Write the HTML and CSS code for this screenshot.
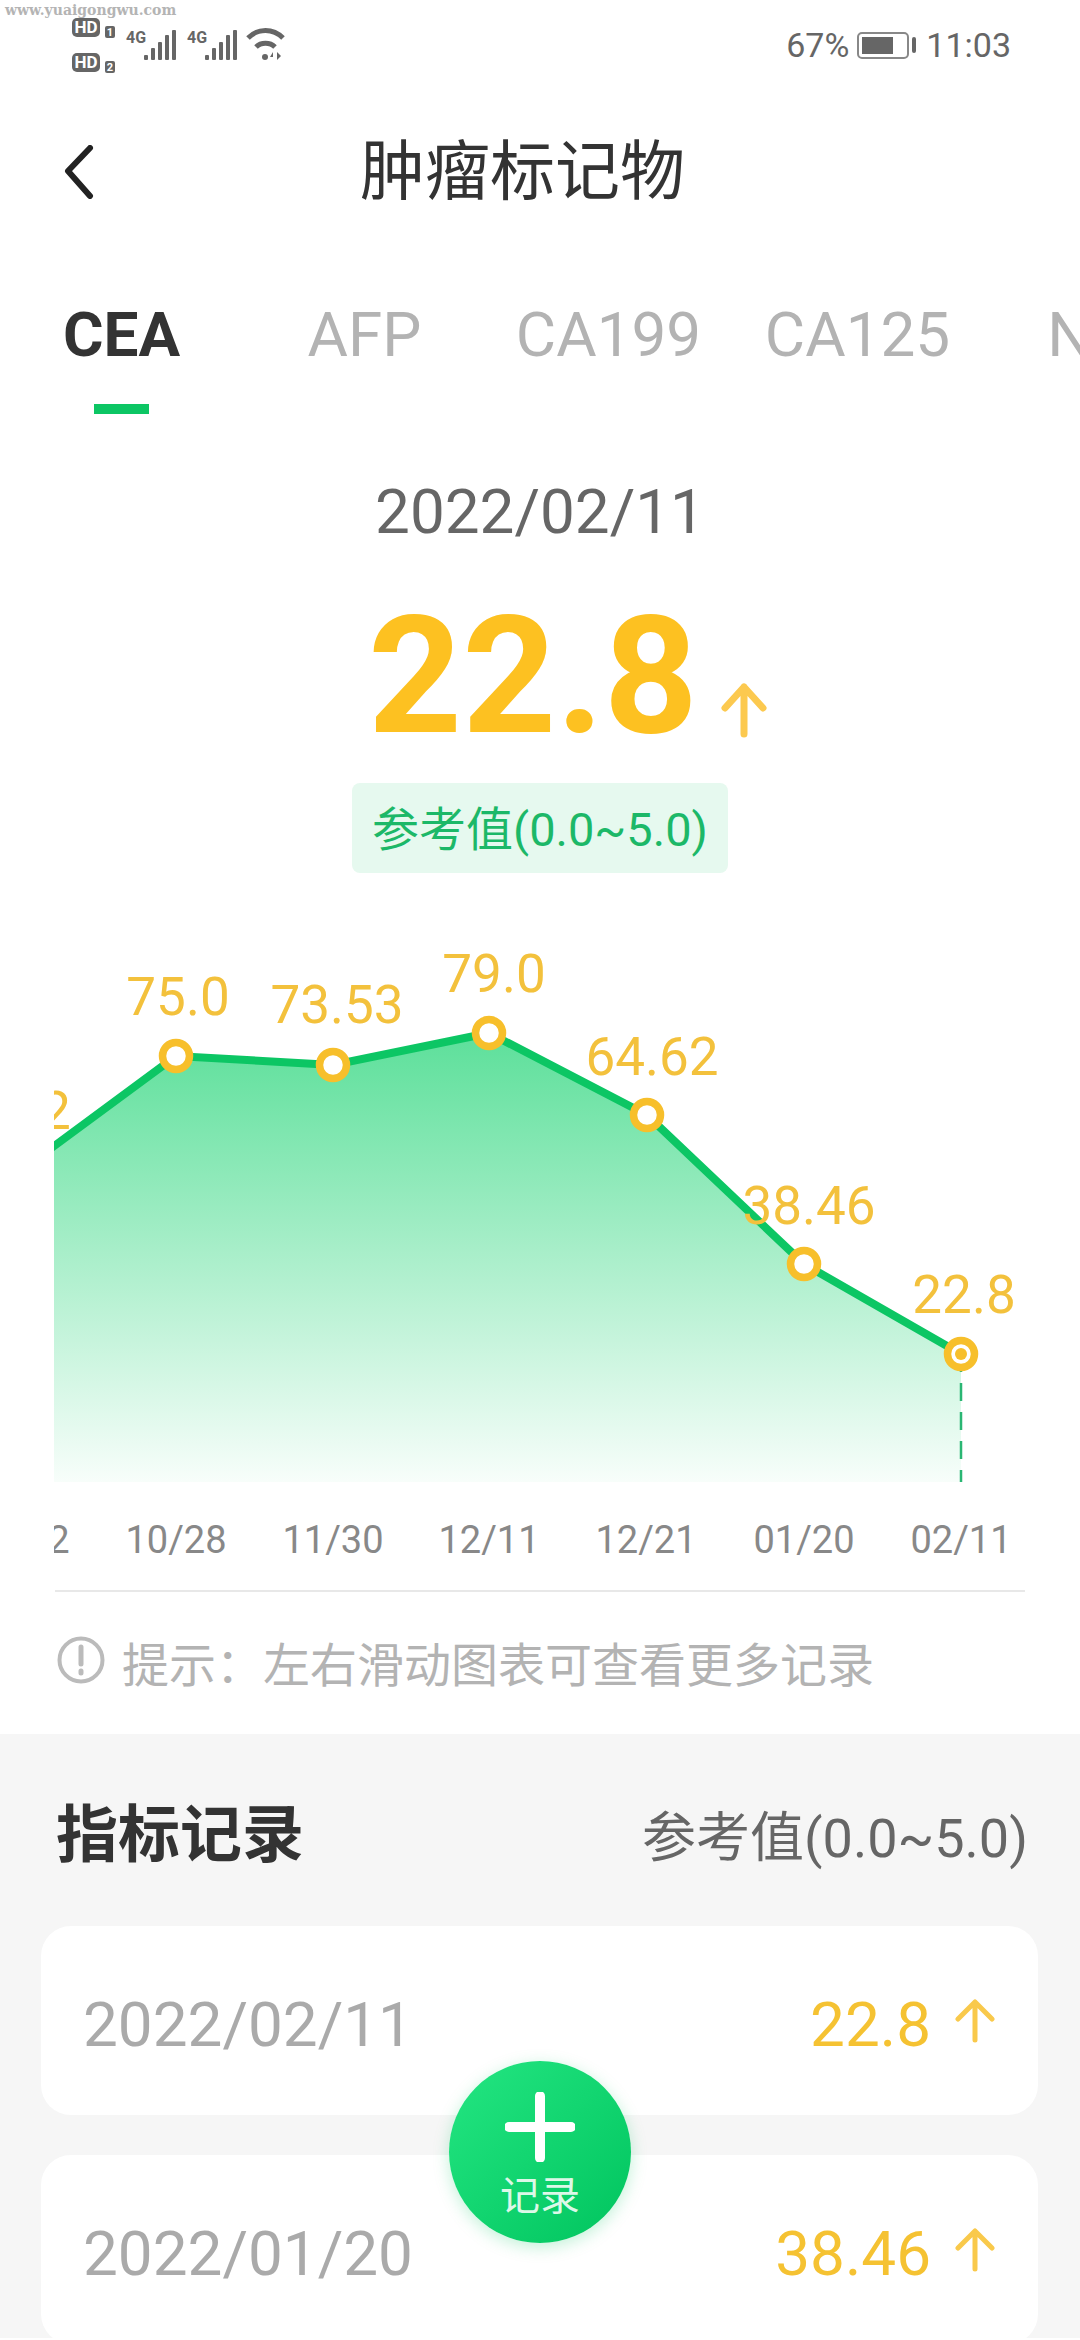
FILE: index.html
```html
<!DOCTYPE html>
<html lang="zh-CN">
<head>
    <meta charset="UTF-8">
    <meta name="viewport" content="width=device-width, initial-scale=1.0">
    <title>肿瘤标记物</title>
    <link rel="stylesheet" href="styles.css">
</head>
<body>
    <div class="page">
        <div class="watermark">www.yuaigongwu.com</div>

        <!-- Status bar -->
        <div class="status">
            <svg class="status-icons" width="230" height="90" viewBox="70 0 230 90">
                <g class="ic-fill">
                    <rect x="72" y="18" width="28" height="19" rx="5"/>
                    <rect x="105" y="26" width="10" height="12" rx="2"/>
                    <rect x="72" y="53" width="28" height="19" rx="5"/>
                    <rect x="105" y="61" width="10" height="12" rx="2"/>
                    <rect x="144" y="55" width="4" height="5" rx="1"/>
                    <rect x="151" y="48" width="4" height="12" rx="1"/>
                    <rect x="158" y="42" width="4" height="18" rx="1"/>
                    <rect x="165" y="35" width="4" height="25" rx="1"/>
                    <rect x="172" y="30" width="4" height="30" rx="1"/>
                    <rect x="205" y="55" width="4" height="5" rx="1"/>
                    <rect x="212" y="48" width="4" height="12" rx="1"/>
                    <rect x="219" y="42" width="4" height="18" rx="1"/>
                    <rect x="226" y="35" width="4" height="25" rx="1"/>
                    <rect x="233" y="30" width="4" height="30" rx="1"/>
                    <circle cx="265" cy="57" r="3"/>
                    <path d="M273 60v-8l-3 5h3zM277 52v8l4-4z"/>
                </g>
                <text class="hd" x="86" y="33">HD</text>
                <text class="hd-num" x="110" y="36">1</text>
                <text class="hd" x="86" y="68">HD</text>
                <text class="hd-num" x="110" y="71">2</text>
                <text class="net" x="126" y="43">4G</text>
                <text class="net" x="187" y="43">4G</text>
                <path class="ic-line" d="M248 38c10-10 25-10 35 0M256 47c5-5 14-5 19 0"/>
            </svg>
            <div class="status-right">
                <span>67%</span>
                <div class="battery"><div class="battery-level"></div></div>
                <div class="battery-tip"></div>
                <span>11:03</span>
            </div>
        </div>

        <!-- Title -->
        <div class="nav">
            <svg class="back" width="30" height="54" viewBox="0 0 30 54">
                <path d="M26 3L4 26l22 25"/>
            </svg>
            <div class="nav-title">肿瘤标记物</div>
        </div>

        <!-- Tabs -->
        <div class="tabs">
            <div class="tab active">CEA</div>
            <div class="tab">AFP</div>
            <div class="tab">CA199</div>
            <div class="tab">CA125</div>
            <div class="tab">NSE</div>
        </div>

        <!-- Latest value -->
        <div class="summary">
            <div class="summary-date">2022/02/11</div>
            <div class="summary-value">
                <span>22.8</span>
                <svg class="arrow-big" width="52" height="60" viewBox="0 0 52 60">
                    <path d="M26 56V9M7 30L26 9l19 21"/>
                </svg>
            </div>
            <div class="ref-badge">参考值(0.0~5.0)</div>
        </div>

        <!-- Chart, drawn in page coordinates -->
        <svg class="chart" width="1080" height="660" viewBox="0 930 1080 660">
            <defs>
                <linearGradient id="areaFill" gradientUnits="userSpaceOnUse" x1="0" y1="1032" x2="0" y2="1482">
                    <stop offset="0" stop-color="#08cf66" stop-opacity="0.66"/>
                    <stop offset="1" stop-color="#08cf66" stop-opacity="0.03"/>
                </linearGradient>
                <clipPath id="plotClip">
                    <rect x="54" y="930" width="1026" height="660"/>
                </clipPath>
            </defs>
            <g clip-path="url(#plotClip)">
                <path fill="url(#areaFill)" d="M19 1172L176 1056 333 1065 489 1033 647 1115 804 1264 961 1354V1482H19Z"/>
                <path class="chart-line" d="M19 1172L176 1056 333 1065 489 1033 647 1115 804 1264 961 1354"/>
                <path class="chart-dash" d="M961 1354V1482"/>

                <circle class="point" cx="176" cy="1056" r="13.5"/>
                <circle class="point" cx="333" cy="1065" r="13.5"/>
                <circle class="point" cx="489" cy="1033" r="13.5"/>
                <circle class="point" cx="647" cy="1115" r="13.5"/>
                <circle class="point" cx="804" cy="1264" r="13.5"/>
                <circle class="point" cx="961" cy="1354" r="13.5"/>
                <circle class="point-dot" cx="961" cy="1354" r="6"/>

                <text class="val" x="19" y="1129">68.2</text>
                <text class="val" x="178" y="1015">75.0</text>
                <text class="val" x="337" y="1023">73.53</text>
                <text class="val" x="494" y="992">79.0</text>
                <text class="val" x="652" y="1075">64.62</text>
                <text class="val" x="809" y="1224">38.46</text>
                <text class="val" x="964" y="1313">22.8</text>

                <text class="tick" x="19" y="1553">09/22</text>
                <text class="tick" x="176" y="1553">10/28</text>
                <text class="tick" x="333" y="1553">11/30</text>
                <text class="tick" x="489" y="1553">12/11</text>
                <text class="tick" x="646" y="1553">12/21</text>
                <text class="tick" x="804" y="1553">01/20</text>
                <text class="tick" x="961" y="1553">02/11</text>
            </g>
        </svg>

        <div class="hint">
            <svg class="hint-icon" width="48" height="48" viewBox="0 0 48 48">
                <circle cx="24" cy="24" r="21.5"/>
                <path d="M24 11v17M24 35v2"/>
            </svg>
            <span class="hint-text">提示：左右滑动图表可查看更多记录</span>
        </div>

        <!-- Records -->
        <div class="records">
            <div class="records-head">
                <div class="records-title">指标记录</div>
                <div class="records-ref">参考值(0.0~5.0)</div>
            </div>
            <div class="record">
                <span class="record-date">2022/02/11</span>
                <div class="record-value">
                    <span class="record-num">22.8</span>
                    <svg class="arrow-small" width="40" height="44" viewBox="0 0 40 44">
                        <path d="M20 41V3M3 20L20 3l17 17"/>
                    </svg>
                </div>
            </div>
            <div class="record">
                <span class="record-date">2022/01/20</span>
                <div class="record-value">
                    <span class="record-num">38.46</span>
                    <svg class="arrow-small" width="40" height="44" viewBox="0 0 40 44">
                        <path d="M20 41V3M3 20L20 3l17 17"/>
                    </svg>
                </div>
            </div>
        </div>

        <div class="fab">
            <svg class="fab-plus" width="70" height="70" viewBox="0 0 70 70">
                <path d="M35 4v62M4 35h62"/>
            </svg>
            <div class="fab-text">记录</div>
        </div>
    </div>
</body>
</html>
```

FILE: styles.css
```css
/* Basic styling */
body {
    margin: 0;
    background-color: white;
    font-family: Roboto, "Noto Sans CJK SC", sans-serif;
}

.page {
    position: relative;
    width: 1080px;
    height: 2340px;
    overflow: hidden;
}

.watermark {
    position: absolute;
    left: 5px;
    top: 2px;
    font-family: "DejaVu Serif", serif;
    font-size: 14px;
    font-weight: bold;
    color: #b4b4b4;
}

/* Status bar */
.status {
    height: 90px;
    display: flex;
    justify-content: space-between;
}

.status-icons {
    margin-left: 70px;
}

.ic-fill {
    fill: #666;
}

.ic-line {
    fill: none;
    stroke: #666;
    stroke-width: 5;
}

.hd {
    font-size: 17px;
    font-weight: bold;
    fill: white;
    text-anchor: middle;
}

.hd-num {
    font-size: 11px;
    font-weight: bold;
    fill: white;
    text-anchor: middle;
}

.net {
    font-size: 16px;
    font-weight: bold;
    fill: #666;
}

.status-right {
    display: flex;
    align-items: center;
    margin-right: 69px;
    font-size: 34px;
    color: #666;
}

.battery {
    width: 52px;
    height: 27px;
    box-sizing: border-box;
    margin-left: 8px;
    padding: 3px;
    border: 2px solid #888;
    border-radius: 5px;
}

.battery-level {
    width: 31px;
    height: 100%;
    background: #666;
}

.battery-tip {
    width: 4px;
    height: 16px;
    margin: 0 10px 0 3px;
    border-radius: 2px;
    background: #666;
}

/* Title */
.nav {
    height: 164px;
    display: flex;
    align-items: center;
    padding-left: 64px;
}

.back path {
    fill: none;
    stroke: #222;
    stroke-width: 6;
    stroke-linecap: round;
    stroke-linejoin: round;
}

.nav-title {
    margin-left: 266px;
    margin-top: -12px;
    font-size: 65px;
    color: #333;
}

/* Tabs */
.tabs {
    display: grid;
    grid-template-columns: 243px 243px 245px 253px 243px;
    grid-auto-rows: 160px;
    height: 160px;
    line-height: 162px;
    font-size: 62px;
    color: #b3b3b3;
}

.tab {
    position: relative;
    text-align: center;
    white-space: nowrap;
}

.tab.active {
    color: #333;
    font-weight: bold;
}

.tab.active::after {
    content: "";
    position: absolute;
    left: 94px;
    bottom: 0;
    width: 55px;
    height: 10px;
    background-color: #0cc664;
}

/* Latest value */
.summary {
    display: flex;
    flex-direction: column;
    align-items: center;
}

.summary-date {
    margin-top: 58px;
    height: 80px;
    line-height: 80px;
    font-size: 62px;
    color: #666;
}

.summary-value {
    display: flex;
    align-items: flex-end;
    gap: 20px;
    margin-top: 54px;
    margin-left: 58px;
    height: 140px;
    line-height: 140px;
    font-size: 164px;
    font-weight: bold;
    color: #fdc121;
}

.arrow-big {
    margin-bottom: 8px;
}

.arrow-big path {
    fill: none;
    stroke: #fcc94f;
    stroke-width: 7;
    stroke-linecap: round;
    stroke-linejoin: round;
}

.ref-badge {
    margin-top: 37px;
    height: 90px;
    line-height: 93px;
    padding: 0 20px;
    border-radius: 8px;
    background-color: #e6f9ef;
    font-size: 47px;
    color: #1cb868;
}

/* Chart */
.chart {
    display: block;
    margin-top: 57px;
}

.chart-line {
    fill: none;
    stroke: #0cc664;
    stroke-width: 8;
}

.chart-dash {
    fill: none;
    stroke: #2ab673;
    stroke-width: 2.5;
    stroke-dasharray: 18 11;
}

.point {
    fill: white;
    stroke: #f7bf2b;
    stroke-width: 7.5;
}

.point-dot {
    fill: #f7bf2b;
}

.val {
    font-size: 53px;
    fill: #f3c13c;
    text-anchor: middle;
}

.tick {
    font-size: 38px;
    fill: #888;
    text-anchor: middle;
}

/* Hint */
.hint {
    height: 144px;
    margin: 0 55px;
    border-top: 2px solid #e8e8e8;
    box-sizing: border-box;
    display: flex;
    align-items: center;
    gap: 17px;
    font-size: 47px;
    color: #b3b3b3;
}

.hint-icon {
    margin-left: 2px;
    margin-top: -6px;
}

.hint-text {
    margin-top: -4px;
}

.hint-icon circle,
.hint-icon path {
    fill: none;
    stroke: #bbb;
    stroke-width: 4;
}

.hint-icon path {
    stroke-width: 5;
    stroke-linecap: round;
}

/* Records */
.records {
    height: 604px;
    padding: 0 42px 0 41px;
    background-color: #f6f6f6;
}

.records-head {
    height: 192px;
    display: flex;
    align-items: center;
    justify-content: space-between;
    padding: 0 10px 0 15px;
}

.records-title {
    font-size: 62px;
    font-weight: bold;
    color: #333;
}

.records-ref {
    margin-top: 7px;
    font-size: 54px;
    color: #666;
}

.record {
    height: 189px;
    margin-bottom: 40px;
    padding: 0 43px 0 42px;
    display: flex;
    align-items: center;
    justify-content: space-between;
    background-color: white;
    border-radius: 30px;
    font-size: 62px;
}

.record-date {
    margin-top: 7px;
    color: #aaa;
}

.record-value {
    display: flex;
    align-items: center;
    gap: 24px;
    color: #f5c232;
}

.record-num {
    margin-top: 7px;
}

.arrow-small path {
    fill: none;
    stroke: #f9c94b;
    stroke-width: 5;
    stroke-linecap: round;
    stroke-linejoin: round;
}

/* Add button */
.fab {
    position: absolute;
    left: 449px;
    top: 2061px;
    width: 182px;
    height: 182px;
    border-radius: 50%;
    display: flex;
    flex-direction: column;
    align-items: center;
    background: linear-gradient(135deg, #24e682, #00c45e);
    box-shadow: 0 4px 16px rgba(12, 198, 100, 0.25);
}

.fab-plus {
    margin-top: 31px;
}

.fab-plus path {
    fill: none;
    stroke: white;
    stroke-width: 10;
    stroke-linecap: round;
}

.fab-text {
    margin-top: 10px;
    font-size: 40px;
    line-height: 50px;
    color: #dcf8e8;
}
```
